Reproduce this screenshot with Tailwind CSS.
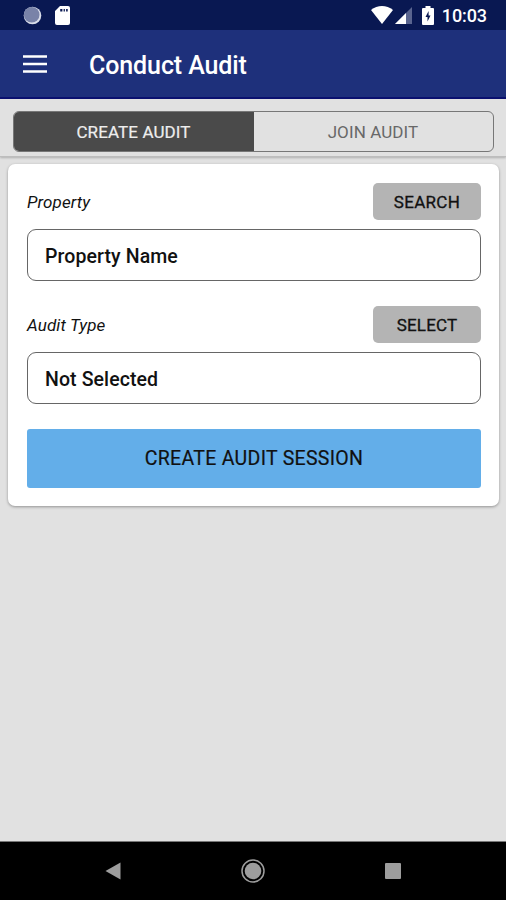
<!DOCTYPE html>
<html lang="en">
<head>
<meta charset="utf-8">
<title>Conduct Audit</title>
<script src="https://cdn.jsdelivr.net/npm/@tailwindcss/browser@4"></script>
</head>
<body class="font-['Roboto',sans-serif]">
<div class="flex h-[900px] w-[506px] flex-col overflow-hidden bg-[#e1e1e1] text-[#111111]">
  <div class="flex h-[30px] shrink-0 items-center justify-between bg-[#091852] pr-[19px] pl-[23px]">
    <div class="flex items-center gap-[13px]">
      <svg class="h-[19px] w-[19px]" viewBox="0 0 19 19"><circle cx="9.5" cy="9.5" r="8.8" fill="#d9dde9"/><circle cx="8.700" cy="8.700" r="7.800" fill="#7983a8"/></svg>
      <svg class="h-[19px] w-[15px]" viewBox="0 0 15 19"><path fill="#fff" fill-rule="evenodd" d="M5 0H13a2 2 0 0 1 2 2V17a2 2 0 0 1-2 2H2a2 2 0 0 1-2-2V5ZM5.200 3V5.600H7.400V3ZM8.600 3V5.600H9.900V3ZM11.100 3V5.600H12.700V3Z"/></svg>
    </div>
    <div class="flex items-center">
      <svg class="h-[18px] w-[22px]" viewBox="0 0 22 18"><path fill="#fff" d="M0 4C6.500-1.300 15.500-1.300 22 4L11 18Z"/></svg>
      <svg class="ml-[2px] h-[17px] w-[17px]" viewBox="0 0 17 17"><path fill="#59648f" d="M17 0V17H0Z"/><path fill="#fff" d="M11 6V17H0Z"/></svg>
      <svg class="ml-[10px] h-[19px] w-[12px]" viewBox="0 0 12 19"><path fill="#fff" d="M3.500 0H8.500V2H11a1 1 0 0 1 1 1V18a1 1 0 0 1-1 1H1a1 1 0 0 1-1-1V3a1 1 0 0 1 1-1H3.500Z"/><path fill="#091852" d="M6.600 5L3.500 11H5.500V15.500L8.500 9.600H6.600Z"/></svg>
      <span class="ml-[8px] pt-[1px] text-[18px] leading-[20px] font-medium tracking-[-0.1px] text-white">10:03</span>
    </div>
  </div>
  <header class="flex h-[69px] shrink-0 items-center border-b-2 border-[#0b1170] bg-[#1e307b] pl-[23px]">
    <svg class="h-[18px] w-[24px]" viewBox="0 0 24 18"><path fill="#fff" d="M0 .2H24V2.800H0ZM0 7.700H24V10.300H0ZM0 15.200H24V17.800H0Z"/></svg>
    <h1 class="ml-[42px] pt-[5px] text-[25px] leading-[30px] font-medium tracking-[-0.1px] text-white">Conduct Audit</h1>
  </header>
  <div class="h-[58px] shrink-0 border-b border-[#bdbdbd] pr-[12px] pl-[13px] pt-[12px] shadow-[0_1px_2px_rgba(0,0,0,0.22)]">
    <div class="flex h-[41px] overflow-hidden rounded-[6px] border border-[#777777] text-[17px] tracking-[0.1px]">
      <div class="-m-px flex w-[241px] items-center justify-center bg-[#4a4a4a] pt-[2px] text-[#eeeeee] [-webkit-text-stroke:0.2px]">CREATE AUDIT</div>
      <div class="flex flex-1 items-center justify-center pt-[2px] text-[#686868]">JOIN AUDIT</div>
    </div>
  </div>
  <main class="mx-[8px] mt-[7px] h-[342px] w-[491px] shrink-0 rounded-[7px] bg-white px-[19px] pt-[19px] shadow-[0_1px_3px_rgba(0,0,0,0.35)]">
    <div class="flex h-[37px] w-[454px] items-center justify-between">
      <span class="pt-[2px] text-[17px] tracking-[0.1px] italic">Property</span>
      <button class="h-[37px] w-[108px] rounded-[5px] bg-[#b4b4b4] pt-[2px] text-[17px] tracking-[0.3px] [-webkit-text-stroke:0.3px]">SEARCH</button>
    </div>
    <div class="mt-[9px] flex h-[52px] w-[454px] items-center rounded-[9px] border border-[#666666] pt-[4px] pl-[17px] text-[19.5px] font-medium tracking-[0.1px]">Property Name</div>
    <div class="mt-[25px] flex h-[37px] w-[454px] items-center justify-between">
      <span class="pt-[2px] text-[17px] tracking-[0.1px] italic">Audit Type</span>
      <button class="h-[37px] w-[108px] rounded-[5px] bg-[#b4b4b4] pt-[2px] text-[17px] tracking-[0.2px] [-webkit-text-stroke:0.3px]">SELECT</button>
    </div>
    <div class="mt-[9px] flex h-[52px] w-[454px] items-center rounded-[9px] border border-[#666666] pt-[4px] pl-[17px] text-[19.5px] font-medium tracking-[0.1px]">Not Selected</div>
    <button class="mt-[25px] h-[59px] w-[454px] rounded-[3px] bg-[#63aee9] pt-px text-[19.5px] tracking-[0.3px] [-webkit-text-stroke:0.2px]">CREATE AUDIT SESSION</button>
  </main>
  <nav class="mt-auto flex h-[59px] shrink-0 items-center justify-between border-t border-[#777777] bg-black pr-[105px] pl-[105px]">
    <svg class="h-[18px] w-[16px]" viewBox="0 0 16 18"><path fill="#9d9d9d" d="M15.500 .5V17.500L.5 9Z"/></svg>
    <svg class="h-[24px] w-[24px]" viewBox="0 0 24 24"><circle cx="12" cy="12" r="11" fill="none" stroke="#9d9d9d" stroke-width="1.500"/><circle cx="12" cy="12" r="8.300" fill="#9d9d9d"/></svg>
    <svg class="h-[16px] w-[16px]" viewBox="0 0 16 16"><rect width="16" height="16" rx="1" fill="#9d9d9d"/></svg>
  </nav>
</div>
</body>
</html>
